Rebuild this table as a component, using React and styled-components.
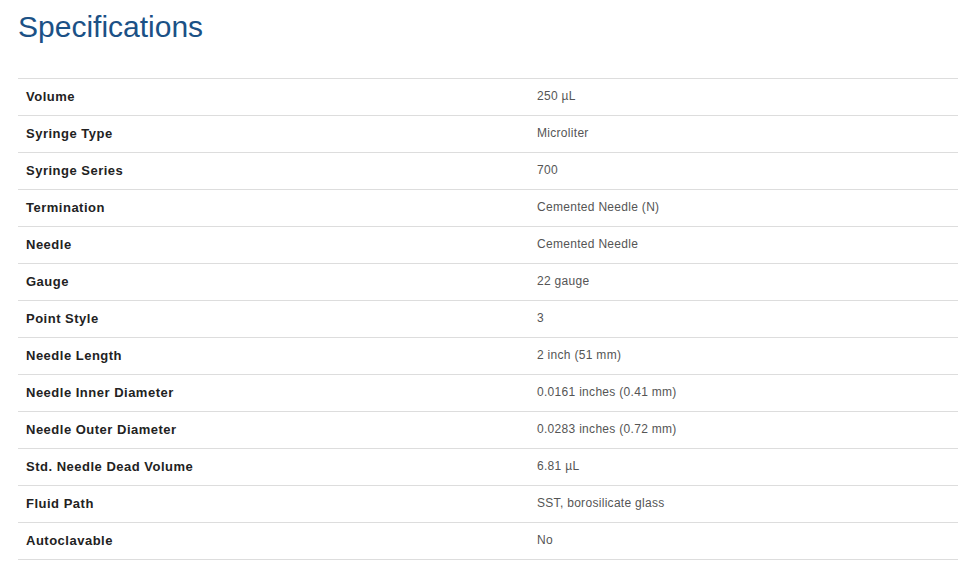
import React from 'react';
import styled, { createGlobalStyle } from 'styled-components';

const GlobalStyle = createGlobalStyle`
  body {
    margin: 0;
    background: #fff;
    font-family: "Liberation Sans", Arial, sans-serif;
  }
`;

const Page = styled.div`
  padding: 10px 11px 0 18px;
`;

const Title = styled.h2`
  margin: 0 0 34px;
  font-size: 30px;
  line-height: 34px;
  font-weight: 400;
  color: #1b5186;
`;

const SpecTable = styled.div`
  border-bottom: 1px solid #dddddd;
`;

const Row = styled.div`
  display: grid;
  grid-template-columns: 511px 1fr;
  align-items: center;
  height: 34px;
  padding: 0 8px 2px;
  border-top: 1px solid #dddddd;
`;

const Label = styled.div`
  font-size: 13px;
  font-weight: 700;
  color: #222;
  letter-spacing: 0.5px;
`;

const Value = styled.div`
  font-size: 12px;
  color: #555;
  letter-spacing: 0.3px;
`;

const specs = [
  ['Volume', '250 µL'],
  ['Syringe Type', 'Microliter'],
  ['Syringe Series', '700'],
  ['Termination', 'Cemented Needle (N)'],
  ['Needle', 'Cemented Needle'],
  ['Gauge', '22 gauge'],
  ['Point Style', '3'],
  ['Needle Length', '2 inch (51 mm)'],
  ['Needle Inner Diameter', '0.0161 inches (0.41 mm)'],
  ['Needle Outer Diameter', '0.0283 inches (0.72 mm)'],
  ['Std. Needle Dead Volume', '6.81 µL'],
  ['Fluid Path', 'SST, borosilicate glass'],
  ['Autoclavable', 'No'],
];

const App = () => {
  return (
    <Page>
      <GlobalStyle />
      <Title>Specifications</Title>
      <SpecTable>
        {specs.map(([label, value]) => (
          <Row key={label}>
            <Label>{label}</Label>
            <Value>{value}</Value>
          </Row>
        ))}
      </SpecTable>
    </Page>
  );
};

export default App;
